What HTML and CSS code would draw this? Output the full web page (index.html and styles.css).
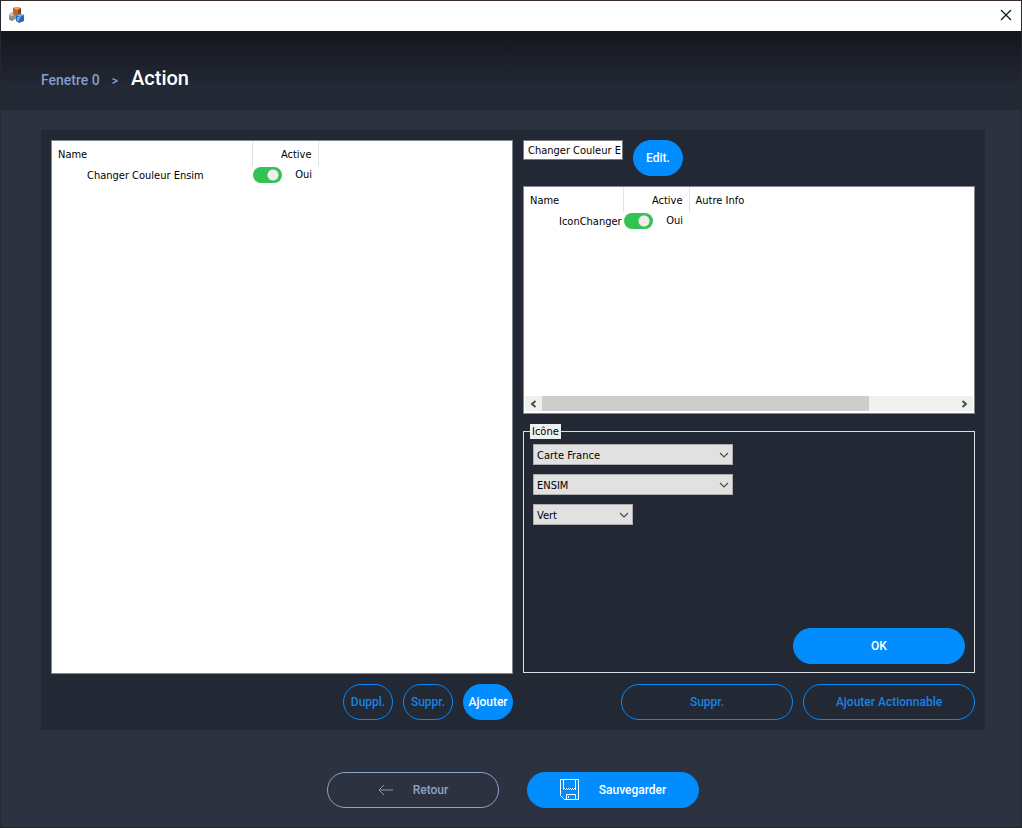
FILE: index.html
```html
<!DOCTYPE html>
<html lang="fr">
<head>
<meta charset="utf-8">
<title>Action</title>
<link rel="stylesheet" href="styles.css">
</head>
<body>
<div class="window">
  <div class="titlebar">
    <svg class="app-icon" width="18" height="18" viewBox="0 0 18 18" aria-hidden="true">
      <path d="M1 9l3-3 4 2v5l-4 2-3-2z" fill="#8f958c"/>
      <path d="M1 9l3 1 4-2-4-2z" fill="#c3c6bd"/>
      <path d="M2 12l2 1v2l-3-2z" fill="#5e8a4c"/>
      <path d="M5 2l4-1 4 1v7l-5 1-3-2z" fill="#c9631b"/>
      <path d="M5 2l4-1 4 1-4 2z" fill="#eea45a"/>
      <path d="M10 4l3-2v7l-3 1z" fill="#8e3f13"/>
      <path d="M8 9l5-1 3 1v6l-5 2-3-2z" fill="#2467bd"/>
      <path d="M8 9l5-1 3 1-4 2z" fill="#78aeea"/>
      <path d="M9 12h3M9 14h2" stroke="#cfe4fa" fill="none"/>
    </svg>
    <button class="close" type="button" aria-label="Fermer">
      <svg width="12" height="12" viewBox="0 0 12 12"><path d="M1 1l10 10M11 1L1 11" stroke="#111" stroke-width="1.200" fill="none"/></svg>
    </button>
  </div>
  <header class="header">
    <nav class="crumbs">
      <a class="crumb" href="#">Fenetre 0</a>
      <span class="sep">&gt;</span>
      <h1 class="title">Action</h1>
    </nav>
  </header>
  <main class="main">
    <div class="panel">
      <section class="column">
        <div class="list">
          <table class="table">
            <colgroup><col class="col-name-wide"><col class="col-active"><col></colgroup>
            <thead><tr><th>Name</th><th class="end">Active</th><th></th></tr></thead>
            <tbody><tr>
              <td class="indent">Changer Couleur Ensim</td>
              <td class="state"><label class="switch"><input type="checkbox" checked><span>Oui</span></label></td>
              <td></td>
            </tr></tbody>
          </table>
        </div>
        <div class="actions">
          <button class="btn small outline" type="button">Duppl.</button>
          <button class="btn small outline" type="button">Suppr.</button>
          <button class="btn small" type="button">Ajouter</button>
        </div>
      </section>
      <section class="column">
        <div class="edit-row">
          <input class="field" type="text" value="Changer Couleur Ensim" aria-label="Nom">
          <button class="btn small" type="button">Edit.</button>
        </div>
        <div class="list sublist">
          <table class="table">
            <colgroup><col class="col-name"><col class="col-active"><col></colgroup>
            <thead><tr><th>Name</th><th class="end">Active</th><th>Autre Info</th></tr></thead>
            <tbody><tr>
              <td class="indent">IconChanger</td>
              <td class="state"><label class="switch"><input type="checkbox" checked><span>Oui</span></label></td>
              <td></td>
            </tr></tbody>
          </table>
          <div class="scrollbar">
            <button class="arrow" type="button" aria-label="Gauche"><svg width="7" height="8" viewBox="0 0 7 8"><path d="M5.500 1L2 4l3.500 3" stroke="#3c4a46" stroke-width="1.800" fill="none"/></svg></button>
            <div class="track"><div class="thumb"></div></div>
            <button class="arrow" type="button" aria-label="Droite"><svg width="7" height="8" viewBox="0 0 7 8"><path d="M1.500 1L5 4 1.500 7" stroke="#3c4a46" stroke-width="1.800" fill="none"/></svg></button>
          </div>
        </div>
        <fieldset class="group">
          <legend class="legend">Icône</legend>
          <div class="group-body">
            <span class="combo"><select aria-label="Carte"><option>Carte France</option></select><svg width="10" height="6" viewBox="0 0 10 6"><path d="M1 1l4 4 4-4" stroke="#444f4c" stroke-width="1.200" fill="none"/></svg></span>
            <span class="combo"><select aria-label="Élément"><option>ENSIM</option></select><svg width="10" height="6" viewBox="0 0 10 6"><path d="M1 1l4 4 4-4" stroke="#444f4c" stroke-width="1.200" fill="none"/></svg></span>
            <span class="combo short"><select aria-label="Couleur"><option>Vert</option></select><svg width="10" height="6" viewBox="0 0 10 6"><path d="M1 1l4 4 4-4" stroke="#444f4c" stroke-width="1.200" fill="none"/></svg></span>
            <button class="btn ok" type="button">OK</button>
          </div>
        </fieldset>
        <div class="actions">
          <button class="btn outline" type="button">Suppr.</button>
          <button class="btn outline" type="button">Ajouter Actionnable</button>
        </div>
      </section>
    </div>
    <footer class="footer">
      <button class="btn back" type="button">
        <svg width="16" height="12" viewBox="0 0 16 12"><path d="M1 6h14M6 1L1 6l5 5" stroke="#8a97a8" fill="none"/></svg>
        Retour
      </button>
      <button class="btn save" type="button">
        <svg width="20" height="22" viewBox="0 0 20 22"><path d="M.5.500h18v20H4.500l-4-4zM3.500.500v10M15.500.500v10M6.500 20.500v-5h9v5M8.500 17v2" stroke="#fff" fill="none"/><path d="M4 9.500h12" stroke="#fff" stroke-dasharray="1 1" fill="none"/><path d="M5 10.500h11" stroke="#fff" stroke-dasharray="1 1" fill="none"/></svg>
        Sauvegarder
      </button>
    </footer>
  </main>
</div>
</body>
</html>
```
FILE: styles.css
```css
* { box-sizing: border-box; }

body {
  margin: 0;
  background: #2c323f;
  font: 11px/15px "DejaVu Sans Condensed", "Open Sans", sans-serif;
  color: #000;
}

button { font: inherit; cursor: pointer; }

.window {
  min-height: 100vh;
  display: flex;
  flex-direction: column;
  border: 1px solid #24272d;
  border-top-color: #3a2c30;
}

.titlebar {
  height: 30px;
  display: flex;
  align-items: center;
  justify-content: space-between;
  padding: 0 9px 2px 7px;
  background: #fff;
}

.close {
  display: flex;
  padding: 0;
  border: 0;
  background: none;
}

.header {
  height: 79px;
  padding: 33px 40px 0;
  background: linear-gradient(#14161e, #222834 70%);
}

.crumbs {
  display: flex;
  align-items: baseline;
  font-family: Roboto, sans-serif;
  color: #839fcb;
}

.crumb {
  font-size: 14px;
  font-weight: 500;
  color: inherit;
  text-decoration: none;
}

.sep {
  margin: 0 13px 0 12px;
  font-size: 12px;
  font-weight: 500;
}

.title {
  margin: 0;
  font-size: 20px;
  line-height: 28px;
  font-weight: 500;
  color: #fff;
}

.main {
  flex: 1;
  display: flex;
  flex-direction: column;
  padding: 20px 36px 19px 40px;
}

.panel {
  flex: 1;
  display: grid;
  grid-template-columns: 462fr 452fr;
  gap: 10px;
  padding: 10px;
  background: #222834;
}

.column {
  min-width: 0;
  display: flex;
  flex-direction: column;
  gap: 10px;
}

.list {
  flex: 1;
  display: flex;
  flex-direction: column;
  justify-content: space-between;
  border: 1px solid #82878f;
  background: #fff;
}

.sublist {
  flex: none;
  height: 228px;
}

.table {
  width: 100%;
  table-layout: fixed;
  border-collapse: collapse;
}

.col-name-wide { width: 200px; }
.col-name { width: 99px; }
.col-active { width: 66px; }

.table th {
  height: 25px;
  padding: 2px 6px 0;
  border-right: 1px solid #e2e2e2;
  font-weight: 400;
  text-align: left;
}

.table th:last-child { border-right: 0; }
.table th.end { text-align: right; }

.table td {
  height: 17px;
  padding: 2px 0 0;
  white-space: nowrap;
}

.table td.indent { padding-left: 35px; }
.table td.state { padding: 0 6px 0 1px; }

.switch {
  display: flex;
  align-items: center;
  justify-content: space-between;
  line-height: 17px;
}

.switch input {
  appearance: none;
  width: 29px;
  height: 16px;
  margin: 0;
  border-radius: 8px;
  background: radial-gradient(circle at 20px 8px, #eee 5px, #35c254 6px);
}

.edit-row {
  display: flex;
  align-items: flex-start;
  gap: 10px;
}

.field {
  width: 100px;
  height: 20px;
  padding: 0 1px 0 4px;
  border: 1px solid #7a7a7a;
  background: #fff;
  font: inherit;
  color: #000;
}

.scrollbar {
  display: flex;
  height: 15px;
  margin: 0 1px 2px;
  background: #f0f0ee;
}

.arrow {
  width: 17px;
  display: flex;
  align-items: center;
  justify-content: center;
  padding: 0;
  border: 0;
  background: none;
}

.track { flex: 1; }

.thumb {
  width: 79%;
  height: 100%;
  background: #cdcdcd;
}

.group {
  flex: 1;
  min-width: 0;
  margin: 0 0 1px;
  padding: 0 9px 8px;
  border: 1px solid #dcdfe3;
}

.legend {
  margin-left: -3px;
  padding: 0 2px;
  background: #f0f0f0;
}

.group-body {
  height: 100%;
  display: flex;
  flex-direction: column;
  align-items: flex-start;
  gap: 9px;
  padding-top: 5px;
}

.combo {
  width: 200px;
  height: 21px;
  display: grid;
  align-items: center;
}

.combo.short { width: 100px; }

.combo > * { grid-area: 1 / 1; }

.combo select {
  appearance: none;
  width: 100%;
  height: 100%;
  padding: 2px 20px 0 3px;
  border: 1px solid #adadad;
  border-radius: 0;
  background: #e1e1e1;
  font: inherit;
  color: #000;
}

.combo svg {
  justify-self: end;
  margin-right: 4px;
  pointer-events: none;
}

.actions {
  display: flex;
  justify-content: flex-end;
  gap: 10px;
}

.btn {
  width: 172px;
  height: 36px;
  display: flex;
  align-items: center;
  justify-content: center;
  padding: 0;
  border: 1px solid #028dff;
  border-radius: 18px;
  background: #028dff;
  font: 500 12px/16px Roboto, sans-serif;
  color: #fff;
  white-space: nowrap;
}

.btn.small { width: 50px; }

.btn.outline {
  background: none;
  color: #1584e8;
}

.btn.ok {
  margin-top: auto;
  align-self: flex-end;
}

.footer {
  display: flex;
  justify-content: center;
  gap: 28px;
  padding-top: 42px;
}

.btn.back {
  gap: 19px;
  border-color: #8aa4cb;
  background: none;
  color: #8aa4cb;
}

.btn.save { gap: 19px; }
```
